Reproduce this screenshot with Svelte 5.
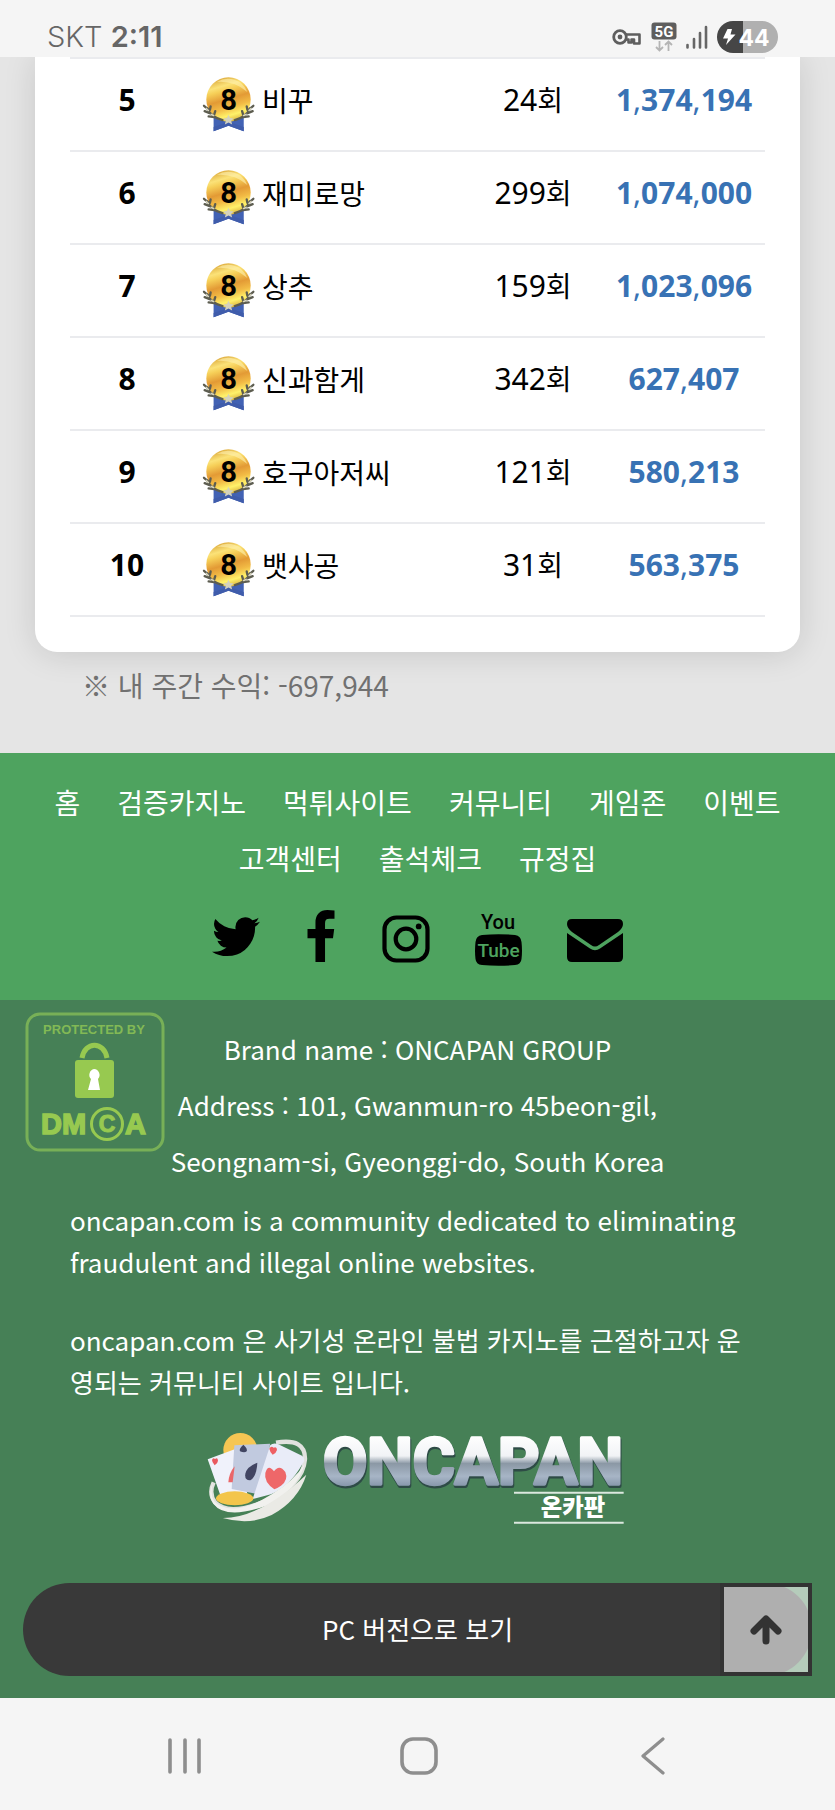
<script>
  const ranking = [
    { rank: 5, name: "비꾸", count: 24, amount: "1,374,194" },
    { rank: 6, name: "재미로망", count: 299, amount: "1,074,000" },
    { rank: 7, name: "상추", count: 159, amount: "1,023,096" },
    { rank: 8, name: "신과함게", count: 342, amount: "627,407" },
    { rank: 9, name: "호구아저씨", count: 121, amount: "580,213" },
    { rank: 10, name: "뱃사공", count: 31, amount: "563,375" },
  ];

  const menu = ["홈", "검증카지노", "먹튀사이트", "커뮤니티", "게임존", "이벤트", "고객센터", "출석체크", "규정집"];

  function scrollTop() {
    window.scrollTo({ top: 0, behavior: "smooth" });
  }
</script>

<div class="screen" lang="ko">
  <div class="statusbar">
    <div class="clock">SKT <b>2:11</b></div>
    <div class="indicators">
      <svg width="30" height="18" viewBox="0 0 30 18" aria-hidden="true">
        <path d="M13 6.5H27.5V15.5H22V11.5H19.5V14.5H16.5V11.5H13" fill="none" stroke="#5e5e5e" stroke-width="2.6" stroke-linejoin="round" />
        <circle cx="8" cy="9" r="6.3" fill="#f5f5f5" stroke="#5e5e5e" stroke-width="2.8" />
        <circle cx="8" cy="9" r="2.4" fill="#5e5e5e" />
      </svg>
      <svg width="26" height="30" viewBox="0 0 26 30" aria-hidden="true">
        <rect x="0.5" y="0.5" width="25" height="17" rx="3" fill="#5e5e5e" />
        <text x="13" y="14.5" text-anchor="middle" font-family="Roboto, sans-serif" font-weight="700" font-size="15" fill="#fff">5G</text>
        <path d="M8.500 19V28M5 25L8.500 28.500L12 25M17.500 29V20M14 23L17.500 19.500L21 23" fill="none" stroke="#b4b4b4" stroke-width="1.800" />
      </svg>
      <svg width="22" height="24" viewBox="0 0 22 24" aria-hidden="true">
        <path d="M1.500 20V22.500M8 14V22.500M14 8V22.500M20 2V22.500" stroke="#666" stroke-width="2.600" stroke-linecap="round" />
      </svg>
      <svg width="61" height="32" viewBox="0 0 61 32" aria-hidden="true">
        <path d="M16 0H45A16 16 0 0 1 45 32H16Z" fill="#b0b0b0" />
        <path d="M26 0H16A16 16 0 0 0 16 32H26Z" fill="#464646" />
        <path d="M10.500 8H15L13.500 13.500H18.500L9 24L11 17.500H6Z" fill="#fff" />
        <text x="37" y="24.500" text-anchor="middle" font-family="Inter, sans-serif" font-weight="700" font-size="23" fill="#fff">44</text>
      </svg>
    </div>
  </div>

  <main>
    <section class="card">
      <table>
        <tbody>
          {#each ranking as row}
            <tr>
              <th scope="row" class="rank">{row.rank}</th>
              <td class="player">
                <div>
                  <svg width="53" height="55" viewBox="605 232 160 164" aria-hidden="true">
                    <defs>
                      <linearGradient id="gold{row.rank}" x1="0.3" y1="0" x2="0.6" y2="1">
                        <stop offset="0" stop-color="#dba73a" />
                        <stop offset="0.2" stop-color="#fbe278" />
                        <stop offset="0.3" stop-color="#f6cf58" />
                        <stop offset="0.5" stop-color="#e39a35" />
                        <stop offset="0.68" stop-color="#f2bb45" />
                        <stop offset="0.85" stop-color="#fff26a" />
                        <stop offset="1" stop-color="#d9b03c" />
                      </linearGradient>
                    </defs>
                    <path d="M640 352L685 362L731 352V395L685 378L640 395Z" fill="#4262b4" />
                    <path d="M640 382L685 366L731 382V395L685 378L640 395Z" fill="#3f5cab" />
                    <circle cx="685" cy="299" r="67" fill="url(#gold{row.rank})" />
                    <path d="M650 246Q684 226 722 248Q736 260 742 276Q702 242 650 246Z" fill="#fff2b0" opacity="0.6" />
                    <g fill="none" stroke="#5d5d50" stroke-width="7" stroke-linecap="round">
                      <path d="M621 326Q632 352 667 361" />
                      <path d="M750 326Q739 352 704 361" />
                      <path d="M611 318L622 327M613 334L628 340M625 350L642 352M631 320L629 330M645 334L642 344" />
                      <path d="M760 318L749 327M758 334L743 340M746 350L729 352M740 320L742 330M726 334L729 344" />
                    </g>
                    <path d="M618 326L624 332M633 344L640 347M753 326L747 332M738 344L731 347" stroke="#d8d5bd" stroke-width="5" stroke-linecap="round" />
                    <path d="M685 345L690 355L701 356L693 363L696 374L685 368L674 374L677 363L669 356L680 355Z" fill="#d4d2bd" />
                    <text x="685" y="332" text-anchor="middle" font-family="Roboto, sans-serif" font-weight="700" font-size="88">8</text>
                  </svg>
                  <span>{row.name}</span>
                </div>
              </td>
              <td class="count">{row.count}<span>회</span></td>
              <td class="amount">
                {#each row.amount.split(",") as part, i}{#if i > 0}<span>,</span>{/if}{part}{/each}
              </td>
            </tr>
          {/each}
        </tbody>
      </table>
    </section>
    <p class="note">※ 내 주간 수익: -697,944</p>
  </main>

  <nav>
    <ul class="menu">
      {#each menu as item}
        <li><a href="#top">{item}</a></li>
      {/each}
    </ul>
    <div class="social">
      <a href="#twitter" aria-label="Twitter">
        <svg width="48" height="56" viewBox="108 86 1576 1839">
          <path transform="translate(0 64)" d="M1684 408q-67 98-162 167 1 14 1 42 0 130-38 259.500t-115.500 248.500-184.500 210.500-258 146-323 54.500q-271 0-496-145 35 4 78 4 225 0 401-138-105-2-188-64.500t-114-159.500q33 5 61 5 43 0 85-11-112-23-185.500-111.500t-73.500-205.500v-4q68 38 146 41-66-44-105-115t-39-154q0-88 44-163 121 149 294.500 238.500t371.500 99.500q-8-38-8-74 0-134 94.500-228.500t228.500-94.500q140 0 236 102 109-21 205-78-37 115-142 178 93-10 186-50z" />
        </svg>
      </a>
      <a href="#facebook" aria-label="Facebook">
        <svg width="32" height="56" viewBox="479 0 864 1792">
          <path d="M1343 12v264h-157q-86 0-116 36t-30 108v189h293l-39 296h-254v759h-306v-759h-255v-296h255v-218q0-186 104-288.500t277-102.500q147 0 228 12z" />
        </svg>
      </a>
      <a href="#instagram" aria-label="Instagram">
        <svg width="48" height="56" viewBox="0 0 48 56">
          <rect x="2.500" y="7.500" width="43" height="43" rx="12" fill="none" stroke="#000" stroke-width="4.200" />
          <circle cx="24" cy="29" r="10.300" fill="none" stroke="#000" stroke-width="4.200" />
          <circle cx="36.700" cy="16.400" r="2.900" />
        </svg>
      </a>
      <a href="#youtube" aria-label="YouTube">
        <svg width="47" height="56" viewBox="0 0 47 56">
          <text x="23" y="19" text-anchor="middle" font-family="Roboto, sans-serif" font-weight="500" font-size="20">You</text>
          <path d="M7 25Q23.500 23.500 40 25Q46 26 46.500 32Q47.500 41 46.500 49Q46 54.500 40 55Q23.500 56.500 7 55Q1 54.500 0.500 49Q-0.500 41 0.500 32Q1 26 7 25Z" />
          <text x="23.500" y="47" text-anchor="middle" font-family="Roboto, sans-serif" font-weight="500" font-size="19" fill="#4ea35f">Tube</text>
        </svg>
      </a>
      <a href="#mail" aria-label="Mail">
        <svg width="56" height="56" viewBox="0 0 56 56">
          <path d="M5 9H51Q56 9 56 14Q56 18 51 22L32 35Q28 38 24 35L5 22Q0 18 0 14Q0 9 5 9Z" />
          <path d="M0 23L23 38.500Q28 42 33 38.500L56 23V47Q56 52 51 52H5Q0 52 0 47Z" />
        </svg>
      </a>
    </div>
  </nav>

  <footer>
    <svg class="dmca" width="140" height="140" viewBox="0 0 140 140" role="img" aria-label="DMCA">
      <rect x="2" y="2" width="136" height="136" rx="13" fill="none" stroke="#78b057" stroke-width="3" />
      <g fill="#97c950" font-family="Liberation Sans, sans-serif" font-weight="700">
        <text x="69" y="22" text-anchor="middle" font-size="13" fill="#82b955">PROTECTED BY</text>
        <rect x="50" y="48" width="39" height="38" rx="3" />
        <path d="M57 46C60 29 79 29 82 46" fill="none" stroke="#97c950" stroke-width="5" />
        <path d="M69 57A6 6 0 0 1 73 67L75 78H63L66 67A6 6 0 0 1 69 57Z" fill="#fff" />
        <text x="16" y="122" font-size="29" stroke="#97c950" stroke-width="1.500">DM</text>
        <circle cx="82" cy="112" r="15.500" fill="none" stroke="#97c950" stroke-width="3" />
        <text x="82" y="120" text-anchor="middle" font-size="23" stroke="#97c950">C</text>
        <text x="100" y="122" font-size="29" stroke="#97c950" stroke-width="1.500">A</text>
      </g>
    </svg>

    <address>
      Brand name : ONCAPAN GROUP<br />
      Address : 101, Gwanmun-ro 45beon-gil,<br />
      Seongnam-si, Gyeonggi-do, South Korea
    </address>

    <p>oncapan.com is a community dedicated to eliminating fraudulent and illegal online websites.</p>
    <p class="korean">oncapan.com 은 사기성 온라인 불법 카지노를 근절하고자 운영되는 커뮤니티 사이트 입니다.</p>

    <svg class="logo" width="424" height="97" viewBox="45 55 1272 291" role="img" aria-label="ONCAPAN 온카판">
      <defs>
        <linearGradient id="chrome" gradientUnits="userSpaceOnUse" x1="0" y1="72" x2="0" y2="224">
          <stop offset="0" stop-color="#fff" />
          <stop offset="0.4" stop-color="#f1f3f6" />
          <stop offset="0.55" stop-color="#8b98a5" />
          <stop offset="0.8" stop-color="#a7b5c6" />
          <stop offset="1" stop-color="#8696aa" />
        </linearGradient>
      </defs>
      <circle cx="148" cy="115" r="51" fill="#f6c653" />
      <path d="M255 93Q344 78 342 143Q335 225 215 272Q110 313 72 272Q52 245 68 212" fill="none" stroke="#e1e2df" stroke-width="13" />
      <path d="M50 143L133 112L170 250L92 262Z" fill="#f0f2fb" />
      <path d="M130 101L237 96L222 252L122 232Z" fill="#c1cadf" />
      <path d="M238 100Q248 92 262 98L333 132Q346 142 334 157Q300 220 240 248L185 262Z" fill="#e9ecf8" />
      <path d="M72 142q8-6 9 5q-1 9-10 14q-8-9-8-16q3-8 9-3z" fill="#e9595f" />
      <path d="M248 108q10-4 10 7q-2 9-13 14q-9-10-10-18q5-10 13-3z" fill="#ee5f63" />
      <path d="M157 99q14 13 10 20q-6 6-20 0q-4-8 10-20z" fill="#414562" />
      <path d="M131 164L125 212H112Q114 184 131 164Z" fill="#ea6769" />
      <path d="M199 153Q197 194 178 206Q160 207 163 186Q168 164 199 153Z" fill="#414562" />
      <path d="M249 179q16-23 34 2q10 24-13 41q-12 8-20 11q-32-22-27-49q8-29 26-5z" fill="#ee6769" />
      <ellipse cx="131" cy="260" rx="56" ry="21" fill="#f3c54b" />
      <path d="M66 214Q51 268 90 283Q145 309 242 248Q309 207 341 157Q318 237 226 282Q105 326 67 276Q48 247 66 214Z" fill="#f1f1ee" />
      <path d="M95 319Q205 320 346 189Q322 266 242 310Q175 342 95 319Z" fill="#eaeae5" />
      <g font-family="Roboto, sans-serif" font-weight="700" font-size="193" stroke-linejoin="round">
        <text x="398" y="223" fill="#243540" opacity="0.7" stroke="#243540" stroke-width="12">ONCAPAN</text>
        <text x="396" y="217" fill="url(#chrome)" stroke="url(#chrome)" stroke-width="10">ONCAPAN</text>
      </g>
      <path d="M969 243H1298M969 333H1298" stroke="#dce8df" stroke-width="6" />
      <text x="1146" y="314" text-anchor="middle" font-family="Noto Sans CJK KR, sans-serif" font-weight="900" font-size="70" fill="#fff">온카판</text>
    </svg>

    <div class="version">
      <button class="pc" type="button">PC 버전으로 보기</button>
      <button class="top" type="button" aria-label="맨 위로" onclick={scrollTop}>
        <svg width="32" height="30" viewBox="0 0 32 30">
          <path d="M16 26V5M4 16L16 4L28 16" fill="none" stroke="#333" stroke-width="7" stroke-linecap="round" stroke-linejoin="round" />
        </svg>
      </button>
    </div>
  </footer>

  <div class="navbar">
    <button type="button" aria-label="최근 앱">
      <svg width="36" height="38" viewBox="0 0 36 38"><path d="M3 3V35M18 3V35M32 3V35" stroke="#8e8e8e" stroke-width="3.600" stroke-linecap="round" /></svg>
    </button>
    <button type="button" aria-label="홈 화면">
      <svg width="38" height="38" viewBox="0 0 38 38"><rect x="2" y="2" width="34" height="34" rx="11" fill="none" stroke="#8e8e8e" stroke-width="3.600" /></svg>
    </button>
    <button type="button" aria-label="뒤로">
      <svg width="26" height="38" viewBox="0 0 26 38"><path d="M23 2L3 19L23 36" fill="none" stroke="#8e8e8e" stroke-width="3.200" stroke-linecap="round" stroke-linejoin="round" /></svg>
    </button>
  </div>
</div>

<style>
  :global(body) {
    margin: 0;
    background: #f5f5f5;
  }

  .screen {
    font-family: "Noto Sans CJK KR", sans-serif;
    font-size: 26px;
    color: #000;
    background: #f5f5f5;
  }

  svg {
    display: block;
    flex: none;
  }

  a {
    color: inherit;
    text-decoration: none;
  }

  button {
    padding: 0;
    border: none;
    font: inherit;
    cursor: pointer;
  }

  /* status bar */
  .statusbar {
    display: flex;
    justify-content: space-between;
    align-items: center;
    box-sizing: border-box;
    height: 57px;
    padding: 17px 57px 0 47px;
  }

  .clock {
    font-family: Inter, sans-serif;
    font-size: 29px;
    font-weight: 300;
    line-height: 32px;
    color: #666;
  }

  .clock b {
    font-weight: 600;
  }

  .indicators {
    display: flex;
    align-items: center;
    gap: 9px;
  }

  /* ranking */
  main {
    padding: 0 35px 47px;
    overflow: hidden;
    background: #e5e5e5;
  }

  .card {
    padding: 0 35px 35px;
    border-radius: 0 0 22px 22px;
    background: #fff;
    box-shadow: 0 2px 32px rgba(0, 0, 0, 0.13);
  }

  table {
    width: 100%;
    table-layout: fixed;
    border-collapse: collapse;
    border-top: 2px solid #eaebee;
    font-family: "Noto Sans", "Noto Sans CJK KR", sans-serif;
    font-size: 30px;
    line-height: 40px;
  }

  tr {
    height: 93px;
    border-bottom: 2px solid #eaebee;
  }

  th,
  td {
    padding: 0 0 10px;
    text-align: center;
  }

  .rank {
    width: 114px;
  }

  .player {
    padding: 0 0 0 18px;
    font-family: "Noto Sans CJK KR", sans-serif;
    font-size: 28px;
  }

  .player div {
    display: flex;
    align-items: center;
    gap: 7px;
  }

  .player span {
    padding-bottom: 10px;
  }

  .count {
    width: 140px;
  }

  .count span {
    font-size: 28px;
  }

  .amount {
    width: 162px;
    font-weight: 700;
    color: #3872b4;
  }

  .amount span {
    font-weight: 400;
  }

  .note {
    margin: 12px 47px 0;
    font-size: 28px;
    line-height: 42px;
    color: #717171;
  }

  /* menu */
  nav {
    padding: 21px 20px 34px;
    background: #4ea35f;
  }

  .menu {
    display: flex;
    flex-wrap: wrap;
    justify-content: center;
    column-gap: 37px;
    margin: 0 0 24px;
    padding: 0;
    list-style: none;
    font-size: 28px;
    line-height: 56px;
    color: #fff;
  }

  .social {
    display: flex;
    justify-content: center;
    gap: 45px;
  }

  /* footer */
  footer {
    position: relative;
    padding: 21px 23px 22px;
    background: #468056;
    color: #fff;
  }

  .dmca {
    position: absolute;
    top: 12px;
    left: 25px;
  }

  address {
    font-style: normal;
    line-height: 56px;
    text-align: center;
  }

  footer p {
    margin: 10px 52px 36px 47px;
    line-height: 42px;
  }

  footer .korean {
    margin-bottom: 27px;
    word-break: break-all;
  }

  .logo {
    margin: 0 auto 56px;
  }

  .version {
    position: relative;
  }

  .pc {
    display: block;
    width: 100%;
    height: 93px;
    padding-bottom: 3px;
    border-radius: 47px;
    background: #393939;
    color: #fff;
  }

  .top {
    position: absolute;
    top: 0;
    right: 0;
    display: flex;
    justify-content: center;
    align-items: center;
    box-sizing: border-box;
    width: 92px;
    height: 93px;
    border: 4px solid #333;
    background: rgba(255, 255, 255, 0.6);
  }

  /* system buttons */
  .navbar {
    display: flex;
    justify-content: center;
    align-items: center;
    gap: 194px;
    box-sizing: border-box;
    height: 112px;
    padding: 4px 0 0 3px;
  }

  .navbar button {
    display: flex;
    justify-content: center;
    width: 40px;
    background: none;
  }
</style>
